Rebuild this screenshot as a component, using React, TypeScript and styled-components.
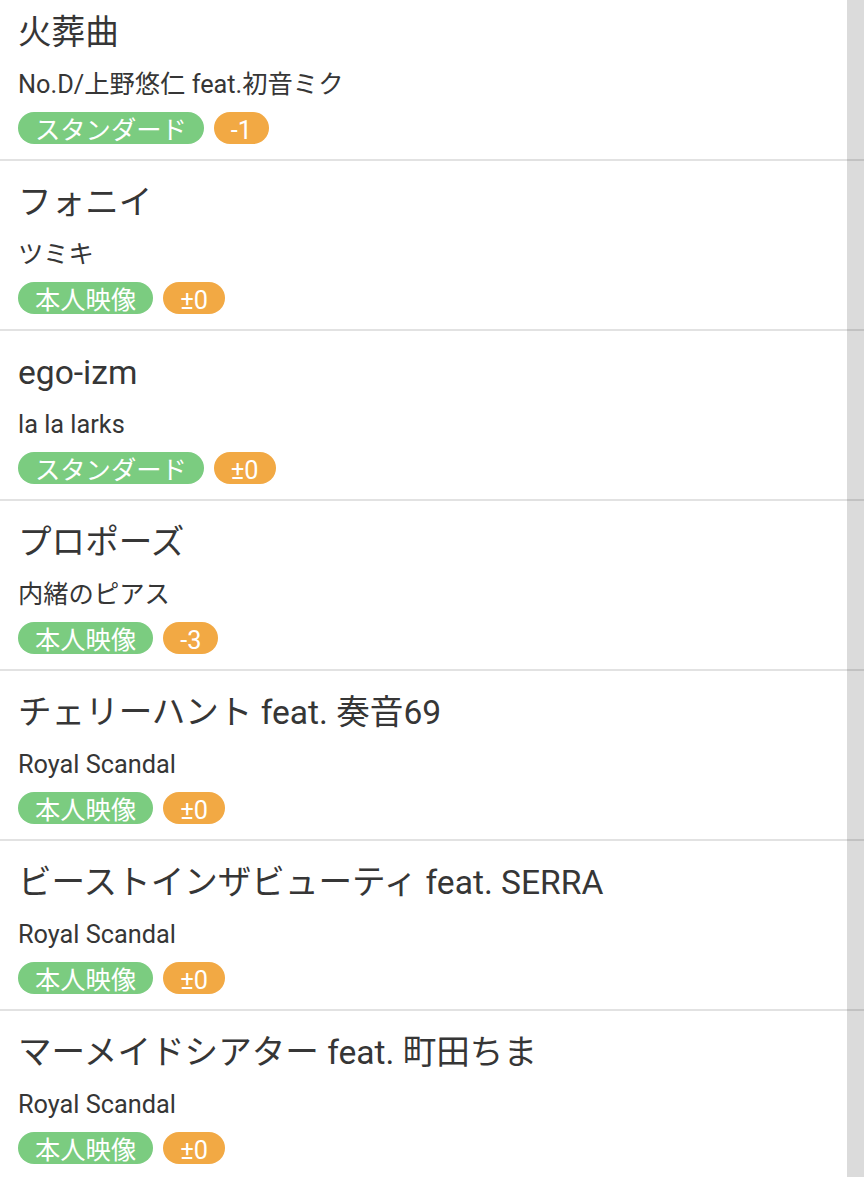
import React from "react";
import styled, { createGlobalStyle } from "styled-components";

const GlobalStyle = createGlobalStyle`
  html, body {
    margin: 0;
    padding: 0;
    background: #ffffff;
    overflow: hidden;
  }
  body {
    font-family: Roboto, "Noto Sans CJK JP", "Noto Sans", sans-serif;
    color: #363636;
  }
`;

const Page = styled.div`
  width: 864px;
  height: 1177px;
  overflow: hidden;
  background: #ffffff;
`;

const List = styled.ul`
  list-style: none;
  margin: -9px 0 0 0;
  padding: 0;
  display: flex;
  flex-direction: column;
`;

const Row = styled.li`
  display: flex;
  flex-direction: column;
  align-items: flex-start;
  padding: 21px 18px 15px 18px;
  border-bottom: 2px solid #e2e2e2;
`;

const Title = styled.div`
  font-size: 33.6px;
  line-height: 42px;
  color: #363636;
  white-space: nowrap;
`;

const Artist = styled.div`
  margin-top: 15px;
  font-size: 25.3px;
  line-height: 32px;
  color: #363636;
  white-space: nowrap;
`;

const Badges = styled.div`
  margin-top: 11px;
  display: flex;
  gap: 10px;
`;

const Badge = styled.span<{ $tone: "green" | "orange" }>`
  display: inline-block;
  box-sizing: border-box;
  height: 32px;
  padding: 6px 17px 0 17px;
  border-radius: 16px;
  font-size: 25.3px;
  line-height: 26px;
  color: #ffffff;
  background: ${(p) => (p.$tone === "green" ? "#7bcc80" : "#f2a944")};
  white-space: nowrap;
`;

const ScrollTrack = styled.div`
  position: fixed;
  top: 0;
  right: 0;
  width: 17px;
  height: 100%;
  background: rgba(0, 0, 0, 0.14);
  pointer-events: none;
`;

type Song = { title: string; artist: string; kind: string; key: string };

const songs: Song[] = [
  { title: "火葬曲", artist: "No.D/上野悠仁 feat.初音ミク", kind: "スタンダード", key: "-1" },
  { title: "フォニイ", artist: "ツミキ", kind: "本人映像", key: "±0" },
  { title: "ego-izm", artist: "la la larks", kind: "スタンダード", key: "±0" },
  { title: "プロポーズ", artist: "内緒のピアス", kind: "本人映像", key: "-3" },
  { title: "チェリーハント feat. 奏音69", artist: "Royal Scandal", kind: "本人映像", key: "±0" },
  { title: "ビーストインザビューティ feat. SERRA", artist: "Royal Scandal", kind: "本人映像", key: "±0" },
  { title: "マーメイドシアター feat. 町田ちま", artist: "Royal Scandal", kind: "本人映像", key: "±0" },
];

export default function App() {
  return (
    <Page>
      <GlobalStyle />
      <List>
        {songs.map((s, i) => (
          <Row key={i}>
            <Title>{s.title}</Title>
            <Artist>{s.artist}</Artist>
            <Badges>
              <Badge $tone="green">{s.kind}</Badge>
              <Badge $tone="orange">{s.key}</Badge>
            </Badges>
          </Row>
        ))}
      </List>
      <ScrollTrack />
    </Page>
  );
}
